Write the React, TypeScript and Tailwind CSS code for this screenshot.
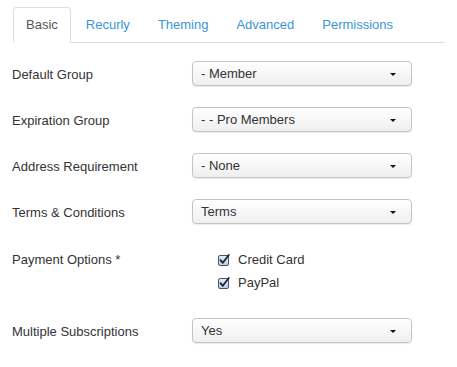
import React from "react";

const tabs = ["Basic", "Recurly", "Theming", "Advanced", "Permissions"];

const selects = [
  { label: "Default Group", value: "- Member" },
  { label: "Expiration Group", value: "- - Pro Members" },
  { label: "Address Requirement", value: "- None" },
  { label: "Terms & Conditions", value: "Terms" },
];

function Select({ value }: { value: string }) {
  return (
    <div className="flex h-[25px] w-[220px] items-center justify-between rounded-[4px] border border-[#c4c4c4] bg-gradient-to-b from-white to-[#efefef] pl-[8px] pr-[15px] text-[13px] text-[#333] shadow-[0_1px_1px_rgba(0,0,0,0.08)]">
      <span>{value}</span>
      <svg width="6" height="3" viewBox="0 0 6 3" className="mt-[1px]">
        <path d="M0 0h6L3 3z" fill="#111" />
      </svg>
    </div>
  );
}

function Check({ label }: { label: string }) {
  return (
    <div className="flex h-[23px] items-center gap-[8px] pl-[26px]">
      <svg width="12" height="12" viewBox="0 0 12 12">
        <defs>
          <linearGradient id="cb" x1="0" y1="0" x2="0" y2="1">
            <stop offset="0" stopColor="#e6eef8" />
            <stop offset="1" stopColor="#b9cde6" />
          </linearGradient>
        </defs>
        <rect x="0.5" y="1.5" width="10" height="10" rx="1.5" fill="url(#cb)" stroke="#4a5566" />
        <path d="M2.5 6.2l2.3 2.6L10.8 1" fill="none" stroke="#1b2330" strokeWidth="1.8" strokeLinecap="round" strokeLinejoin="round" />
      </svg>
      <span className="text-[13px] text-[#333]">{label}</span>
    </div>
  );
}

export default function App() {
  return (
    <div className="h-[367px] w-[457px] bg-white px-[12px] pt-[7px] font-['Liberation_Sans',Arial,sans-serif] text-[13px] text-[#333]">
      <ul className="ml-px flex border-b border-[#dddddd]">
        {tabs.map((t, i) => (
          <li key={t} className="-mb-px mr-[2px]">
            <span
              className={
                i === 0
                  ? "block rounded-t-[4px] border border-[#dddddd] border-b-white bg-white px-[12px] py-[8px] leading-[18px] text-[#555]"
                  : "block border border-transparent px-[12px] py-[8px] leading-[18px] text-[#3a96d8]"
              }
            >
              {t}
            </span>
          </li>
        ))}
      </ul>

      <div className="mt-[18px] flex flex-col">
        {selects.map((s) => (
          <div key={s.label} className="mb-[21px] flex h-[25px] items-center">
            <div className="w-[180px] pt-[2px]">{s.label}</div>
            <Select value={s.value} />
          </div>
        ))}

        <div className="mt-[3px] flex">
          <div className="w-[180px] pt-[3px] leading-[18px]">Payment Options *</div>
          <div className="flex flex-col">
            <Check label="Credit Card" />
            <Check label="PayPal" />
          </div>
        </div>

        <div className="mt-[24px] flex h-[25px] items-center">
          <div className="w-[180px] pt-[3px]">Multiple Subscriptions</div>
          <Select value="Yes" />
        </div>
      </div>
    </div>
  );
}
